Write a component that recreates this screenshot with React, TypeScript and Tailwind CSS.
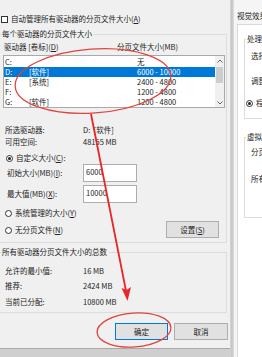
import React from 'react';

interface Drive {
  letter: string;
  label: string;
  size: string;
  selected?: boolean;
}

const drives: Drive[] = [
  { letter: 'C:', label: '', size: '无' },
  { letter: 'D:', label: '[软件]', size: '6000 - 10000', selected: true },
  { letter: 'E:', label: '[系统]', size: '2400 - 4800' },
  { letter: 'F:', label: '', size: '1200 - 4800' },
  { letter: 'G:', label: '[软件]', size: '1200 - 4800' },
];

const U = ({ k }: { k: string }) => <span className="underline">{k}</span>;

const Radio = ({ checked }: { checked?: boolean }) => (
  <span className="w-[7px] h-[7px] rounded-full border border-[#333] bg-white flex items-center justify-center shrink-0">
    {checked && <span className="w-[3px] h-[3px] rounded-full bg-[#222]" />}
  </span>
);

const Chevron = ({ up }: { up?: boolean }) => (
  <svg width="6" height="4" viewBox="0 0 6 4" className="shrink-0">
    <path d={up ? 'M0.5 3.5 L3 1 L5.5 3.5' : 'M0.5 0.5 L3 3 L5.5 0.5'} fill="none" stroke="#555" strokeWidth="0.9" />
  </svg>
);

const App: React.FC = () => {
  return (
    <div className="relative w-[262px] h-[357px] overflow-hidden flex bg-[#f0f0f0] text-[7.5px] leading-[10px] text-[#222] font-['Noto_Sans_CJK_SC','Liberation_Sans',sans-serif]">
      {/* Virtual memory dialog */}
      <div className="w-[230px] flex flex-col bg-[#f0f0f0]">
        <div className="h-[14px]" />
        <div className="h-[10px] flex items-center gap-[3px] pl-[1px] whitespace-nowrap">
          <span className="w-[7px] h-[7px] border border-[#333] bg-white shrink-0" />
          <span>自动管理所有驱动器的分页文件大小(<U k="A" />)</span>
        </div>

        {/* Per drive groupbox */}
        <fieldset className="mt-[5px] w-[227px] border border-l-0 border-[#dcdcdc] pl-[3px] pb-[4px]">
          <legend className="pr-[2px] -ml-[1px] whitespace-nowrap">每个驱动器的分页文件大小</legend>
          <div className="mt-[3px] h-[10px] flex items-center whitespace-nowrap">
            <span className="w-[114px] pl-[1px]">驱动器 [卷标](<U k="D" />)</span>
            <span>分页文件大小(MB)</span>
          </div>
          <div className="mt-[3px] w-[222px] h-[53px] border border-[#a9a9a9] bg-white flex">
            <div className="flex-1 pt-[1px]">
              {drives.map((d) => (
                <div
                  key={d.letter}
                  className={`h-[10px] flex items-center whitespace-nowrap ${
                    d.selected ? 'bg-[#0078d7] text-white' : ''
                  }`}
                >
                  <span className="w-[25px] pl-[1px]">{d.letter}</span>
                  <span className="w-[108px]">{d.label}</span>
                  <span>{d.size}</span>
                </div>
              ))}
            </div>
            <div className="w-[9px] bg-[#f0f0f0] flex flex-col items-center">
              <div className="h-[9px] flex items-center justify-center">
                <Chevron up />
              </div>
              <div className="mt-[2px] w-[7px] h-[16px] bg-[#cdcdcd]" />
              <div className="flex-1" />
              <div className="h-[9px] flex items-center justify-center">
                <Chevron />
              </div>
            </div>
          </div>

          <div className="mt-[17px] h-[10px] flex items-center whitespace-nowrap">
            <span className="w-[80px] pl-[2px]">所选驱动器:</span>
            <span>D:&nbsp;&nbsp;[软件]</span>
          </div>
          <div className="mt-[2px] h-[10px] flex items-center whitespace-nowrap">
            <span className="w-[80px] pl-[2px]">可用空间:</span>
            <span>48155 MB</span>
          </div>

          <div className="mt-[6px] h-[10px] flex items-center gap-[3px] pl-[3px] whitespace-nowrap">
            <Radio checked />
            <span>自定义大小(<U k="C" />):</span>
          </div>
          <div className="mt-[1px] h-[18px] flex items-center whitespace-nowrap">
            <span className="w-[80px] pl-[4px]">初始大小(MB)(<U k="I" />):</span>
            <span className="w-[54px] h-[18px] border border-[#adadad] bg-white pl-[2px] pt-[2px]">6000</span>
          </div>
          <div className="mt-[3px] h-[18px] flex items-center whitespace-nowrap">
            <span className="w-[80px] pl-[4px]">最大值(MB)(<U k="X" />):</span>
            <span className="w-[54px] h-[18px] border border-[#adadad] bg-white pl-[2px] pt-[2px]">10000</span>
          </div>

          <div className="mt-[5px] flex items-start">
            <div className="flex flex-col">
              <div className="h-[10px] flex items-center gap-[3px] pl-[2px] whitespace-nowrap">
                <Radio />
                <span>系统管理的大小(<U k="Y" />)</span>
              </div>
              <div className="mt-[7px] h-[10px] flex items-center gap-[3px] pl-[2px] whitespace-nowrap">
                <Radio />
                <span>无分页文件(<U k="N" />)</span>
              </div>
            </div>
            <button className="ml-auto mr-[7px] mt-[13px] w-[53px] h-[17px] border border-[#adadad] bg-[#e1e1e1] flex items-center justify-center">
              设置(<U k="S" />)
            </button>
          </div>
        </fieldset>

        {/* Totals groupbox */}
        <fieldset className="mt-[4px] w-[227px] border border-l-0 border-[#dcdcdc] pl-[3px] pb-[5px]">
          <legend className="pr-[2px] -ml-[1px] whitespace-nowrap">所有驱动器分页文件大小的总数</legend>
          <div className="mt-[9px] h-[10px] flex items-center whitespace-nowrap">
            <span className="w-[80px] pl-[2px]">允许的最小值:</span>
            <span>16 MB</span>
          </div>
          <div className="mt-[5px] h-[10px] flex items-center whitespace-nowrap">
            <span className="w-[80px] pl-[2px]">推荐:</span>
            <span>2424 MB</span>
          </div>
          <div className="mt-[6px] h-[10px] flex items-center whitespace-nowrap">
            <span className="w-[80px] pl-[2px]">当前已分配:</span>
            <span>10800 MB</span>
          </div>
        </fieldset>

        <div className="mt-[10px] flex justify-end gap-[6px] pr-[2px]">
          <button className="w-[53px] h-[17px] border border-[#0078d7] bg-[#e1e1e1] flex items-center justify-center">
            确定
          </button>
          <button className="w-[54px] h-[17px] border border-[#adadad] bg-[#e1e1e1] flex items-center justify-center">
            取消
          </button>
        </div>
        <div className="mt-[8px] flex-1 bg-[#cfcfcf] border-t border-[#a8a8a8]" />
      </div>

      {/* Window edge */}
      <div className="w-[4px] bg-linear-to-r from-[#d8d8d8] via-[#c2c2c2] to-[#e4e4e4]" />

      {/* Performance options window behind */}
      <div className="flex-1 overflow-hidden bg-[#f5f5f5] flex flex-col">
        <div className="h-[24px] pt-[11px] pl-[3px] whitespace-nowrap">视觉效果</div>
        <div className="flex-1 ml-[3px] w-[200px] bg-white border-l border-t border-[#d9d9d9] pt-[9px] pl-[6px]">
          <fieldset className="w-[190px] border border-[#dcdcdc] pl-[1px] pb-[10px]">
            <legend className="px-[1px] whitespace-nowrap">处理器计划</legend>
            <div className="mt-[7px] pl-[5px] whitespace-nowrap">选择如何分配处理器资源。</div>
            <div className="mt-[15px] pl-[5px] whitespace-nowrap">调整以优化性能:</div>
            <div className="mt-[12px] h-[10px] flex items-center gap-[3px] whitespace-nowrap">
              <Radio checked />
              <span>程序(P)</span>
            </div>
          </fieldset>
          <fieldset className="mt-[13px] w-[190px] border border-[#dcdcdc] pl-[1px] pb-[33px]">
            <legend className="px-[1px] whitespace-nowrap">虚拟内存</legend>
            <div className="mt-[5px] pl-[5px] whitespace-nowrap">分页文件是硬盘上的一块区域</div>
            <div className="mt-[17px] pl-[5px] whitespace-nowrap">所有驱动器总分页文件大小:</div>
          </fieldset>
        </div>
      </div>

      {/* Red annotation marks */}
      <svg className="absolute inset-0 pointer-events-none" width="262" height="357" viewBox="0 0 262 357">
        <ellipse cx="93" cy="81" rx="78" ry="32" transform="rotate(-4 93 81)" fill="none" stroke="#e0443c" strokeWidth="1.3" />
        <path d="M91 114 Q108 200 127 296" fill="none" stroke="#e8262b" strokeWidth="1.8" />
        <path d="M127.5 301 L121.5 288 L126.5 290 L131 287 Z" fill="#e8262b" />
        <ellipse cx="134" cy="330" rx="37" ry="17" transform="rotate(-4 134 330)" fill="none" stroke="#e0443c" strokeWidth="1.3" />
      </svg>
    </div>
  );
};

export default App;
